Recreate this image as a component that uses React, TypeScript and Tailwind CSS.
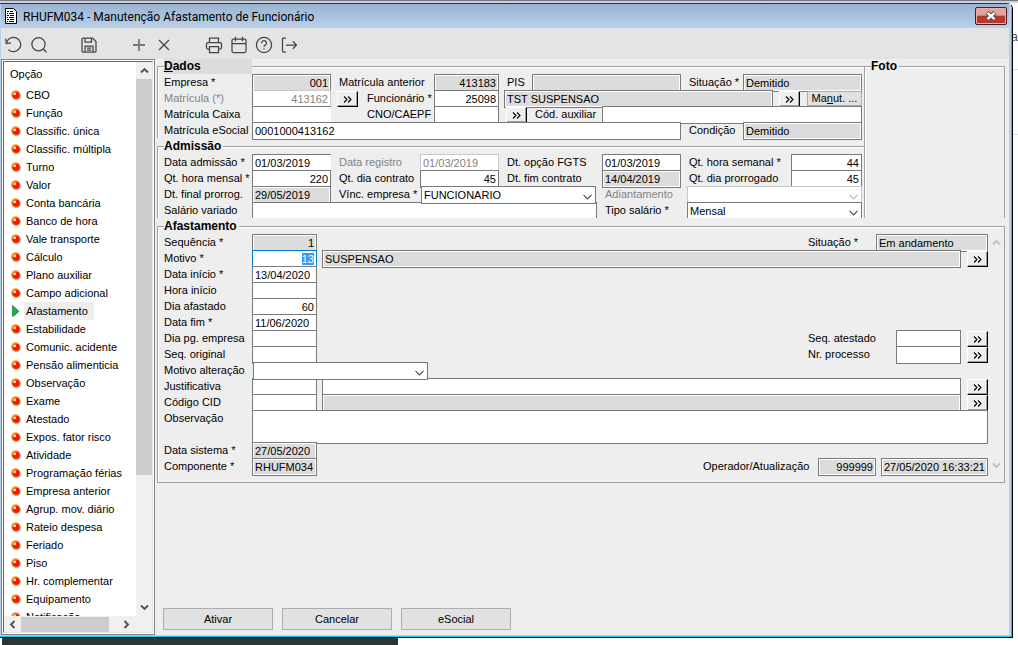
import { useEffect, useRef, type ReactNode } from 'react'
import clsx from 'clsx'

const options = [
  'CBO',
  'Função',
  'Classific. única',
  'Classific. múltipla',
  'Turno',
  'Valor',
  'Conta bancária',
  'Banco de hora',
  'Vale transporte',
  'Cálculo',
  'Plano auxiliar',
  'Campo adicional',
  'Afastamento',
  'Estabilidade',
  'Comunic. acidente',
  'Pensão alimenticia',
  'Observação',
  'Exame',
  'Atestado',
  'Expos. fator risco',
  'Atividade',
  'Programação férias',
  'Empresa anterior',
  'Agrup. mov. diário',
  'Rateio despesa',
  'Feriado',
  'Piso',
  'Hr. complementar',
  'Equipamento',
  'Notificação',
]

function Row({ children }: { children: ReactNode }) {
  return <div className="flex h-4 items-start">{children}</div>
}

type LabelProps = { htmlFor: string; className: string; muted?: boolean; children: ReactNode }

function Label({ htmlFor, className, muted, children }: LabelProps) {
  return (
    <label
      htmlFor={htmlFor}
      className={clsx('h-4 leading-4 whitespace-nowrap', muted ? 'text-[#838383]' : 'text-black', className)}
    >
      {children}
    </label>
  )
}

type FieldProps = {
  id: string
  className: string
  value?: string
  kind?: 'edit' | 'readonly' | 'disabled'
  right?: boolean
  label?: string
}

function Field({ id, className, value = '', kind = 'edit', right, label }: FieldProps) {
  return (
    <input
      id={id}
      aria-label={label}
      defaultValue={value}
      readOnly={kind === 'readonly'}
      disabled={kind === 'disabled'}
      className={clsx(
        'h-[18px] min-w-0 border px-0.5 outline-none',
        kind === 'edit' && 'border-[#7a7a7a] bg-white',
        kind === 'readonly' && 'border-[#7a7a7a] bg-[#dcdcdc] shadow-[inset_0_0_0_1px_#fff]',
        kind === 'disabled' && 'border-[#c8c8c8] bg-white text-[#838383]',
        right && 'text-right',
        className,
      )}
    />
  )
}

type DropdownProps = { id: string; className: string; value?: string; disabled?: boolean }

function Dropdown({ id, className, value = '', disabled }: DropdownProps) {
  return (
    <div className={clsx('relative', className)}>
      <select
        id={id}
        disabled={disabled}
        className={clsx(
          'block h-[18px] w-full appearance-none border bg-white px-0.5 pb-1 outline-none',
          disabled ? 'border-[#c8c8c8]' : 'border-[#7a7a7a]',
        )}
      >
        <option>{value}</option>
      </select>
      <svg
        viewBox="0 0 9 6"
        className={clsx(
          'pointer-events-none absolute top-2 right-1 h-1.5 w-[9px]',
          disabled ? 'text-[#b8b8b8]' : 'text-[#505050]',
        )}
      >
        <path d="M0.5 0.8L4.5 4.8L8.5 0.8" fill="none" stroke="currentColor" strokeWidth="1.2" />
      </svg>
    </div>
  )
}

function LookupButton({ label }: { label: string }) {
  return (
    <button
      aria-label={label}
      className="mt-px flex h-4 w-[21px] shrink-0 items-center justify-center border border-t-white border-r-black border-b-black border-l-white bg-[#eee] shadow-[inset_-1px_-1px_0_#a0a0a0]"
    >
      <svg viewBox="0 0 9 7" className="h-[7px] w-[9px]">
        <path d="M1 0.5L4 3.5L1 6.5M5 0.5L8 3.5L5 6.5" fill="none" stroke="#000" strokeWidth="1.1" />
      </svg>
    </button>
  )
}

function Group({ title, className, children }: { title: ReactNode; className?: string; children?: ReactNode }) {
  return (
    <fieldset
      className={clsx(
        'min-w-0 border-[#a0a0a0] pl-1.5 shadow-[inset_1px_1px_0_#fff]',
        className,
      )}
    >
      {title}
      {children}
    </fieldset>
  )
}

function ToolIcon({ label, children }: { label: string; children: ReactNode }) {
  return (
    <button aria-label={label} className="flex h-[18px] w-[25px] items-center justify-center text-[#444]">
      <svg viewBox="0 0 18 18" className="size-[18px]" fill="none" stroke="currentColor" strokeWidth="1.25">
        {children}
      </svg>
    </button>
  )
}

function Toolbar() {
  return (
    <div className="flex h-[31px] shrink-0 items-center bg-[#e4e4e4] pt-0.5">
      <ToolIcon label="Desfazer">
        <path d="M1.4 7.2A7.2 7.2 0 1 1 3.4 13.6" />
        <path d="M0.7 2.7L1.3 7.5L6 6.8" />
      </ToolIcon>
      <ToolIcon label="Pesquisar">
        <circle cx="8.5" cy="8.3" r="6.6" />
        <path d="M13.2 13L16.5 16.3" />
      </ToolIcon>
      <div className="w-[25px]" />
      <ToolIcon label="Salvar">
        <path d="M3 2h9.5L16 5.5V15a1 1 0 0 1-1 1H3a1 1 0 0 1-1-1V3a1 1 0 0 1 1-1z" />
        <path d="M5 2v4h6.5V2M5 16V10h8v6M7 12h4M7 14h4" />
      </ToolIcon>
      <div className="w-[25px]" />
      <ToolIcon label="Incluir">
        <path d="M9 3v12M3 9h12" stroke="#777" strokeWidth="1.8" />
      </ToolIcon>
      <ToolIcon label="Excluir">
        <path d="M4 4l10 10M14 4L4 14" />
      </ToolIcon>
      <div className="w-[25px]" />
      <ToolIcon label="Imprimir">
        <path d="M4.5 6.5V2h9v4.5M4.5 13H3a1.5 1.5 0 0 1-1.5-1.5V8A1.5 1.5 0 0 1 3 6.5h12A1.5 1.5 0 0 1 16.5 8v3.5A1.5 1.5 0 0 1 15 13h-1.5" />
        <path d="M4.5 10.5h9v6h-9z" />
      </ToolIcon>
      <ToolIcon label="Agenda">
        <rect x="2" y="3" width="14" height="13.5" rx="1.5" />
        <path d="M2 7.5h14M5.5 0.8v4.4M12.5 0.8v4.4" />
      </ToolIcon>
      <ToolIcon label="Ajuda">
        <circle cx="9" cy="9" r="7.6" />
        <path d="M6.6 7.2A2.4 2.4 0 1 1 10.4 9C9.5 9.6 9 9.9 9 10.8M9 12.2v1.4" />
      </ToolIcon>
      <ToolIcon label="Sair">
        <path d="M6 2H3.5a1 1 0 0 0-1 1v12a1 1 0 0 0 1 1H6M6 9h10.5M12.8 5.2L16.5 9l-3.7 3.8" />
      </ToolIcon>
    </div>
  )
}

function Bullet() {
  return (
    <svg viewBox="0 0 10 10" className="size-2.5">
      <circle cx="5.6" cy="5.7" r="4.3" fill="#b9a79c" />
      <circle cx="4.7" cy="4.7" r="4.5" fill="#f7941d" />
      <circle cx="5.1" cy="5.2" r="3.5" fill="#f01800" />
      <circle cx="3.7" cy="3.7" r="1.5" fill="#ffd9a0" />
    </svg>
  )
}

function Arrow({ d, color = '#505050' }: { d: string; color?: string }) {
  return (
    <svg viewBox="0 0 9 9" className="size-[9px]">
      <path d={d} fill="none" stroke={color} strokeWidth="1.9" />
    </svg>
  )
}

const UP = 'M1 6.5L4.5 3L8 6.5'
const DOWN = 'M1 2.5L4.5 6L8 2.5'
const LEFT = 'M6.5 1L3 4.5L6.5 8'
const RIGHT = 'M2.5 1L6 4.5L2.5 8'

function Sidebar() {
  return (
    <nav className="flex w-[154px] shrink-0 border border-[#7c8090] bg-white p-px">
      <div className="flex min-h-0 min-w-0 flex-1 flex-col border border-t-[#696969] border-r-[#e3e3e3] border-b-[#e3e3e3] border-l-[#696969]">
        <div className="flex min-h-0 flex-1">
          <div className="min-w-0 flex-1 overflow-hidden">
            <div className="h-6 pl-1.5 leading-6">Opção</div>
            <ul>
              {options.map((option) => (
                <li key={option} className="flex h-[18px] items-center pl-[7px]">
                  {option === 'Afastamento' ? (
                    <svg viewBox="0 0 10 12" className="h-3 w-2.5">
                      <path d="M2.5 1L8.5 6.5L2.5 12z" fill="#6a9bd8" />
                      <path d="M1.5 0.5L7.5 6L1.5 11.5z" fill="#12b83a" stroke="#0b7d3a" strokeWidth="0.7" />
                    </svg>
                  ) : (
                    <Bullet />
                  )}
                  <a
                    href="#"
                    className={clsx(
                      'ml-[3px] h-[18px] pr-1.5 pl-0.5 leading-[18px] whitespace-nowrap',
                      option === 'Afastamento' && 'bg-[#eee]',
                    )}
                  >
                    {option}
                  </a>
                </li>
              ))}
            </ul>
          </div>
          <div className="flex w-4 flex-col items-center bg-[#f0f0f0]">
            <div className="flex h-[17px] shrink-0 items-center">
              <Arrow d={UP} />
            </div>
            <div className="h-5/7 w-full bg-[#cdcdcd]" />
            <div className="flex-1" />
            <div className="flex h-[17px] shrink-0 items-center">
              <Arrow d={DOWN} />
            </div>
          </div>
        </div>
        <div className="flex h-4 shrink-0 items-center bg-[#f0f0f0]">
          <div className="flex w-[17px] justify-center">
            <Arrow d={LEFT} />
          </div>
          <div className="h-[15px] w-[88px] bg-[#cdcdcd]" />
          <div className="ml-[9px] flex w-[17px] justify-center">
            <Arrow d={RIGHT} />
          </div>
        </div>
      </div>
    </nav>
  )
}

function EmployeeData() {
  return (
    <Group
      className="border-t border-l"
      title={
        <legend className="h-[15px] w-[88px] bg-[#dcdcdc] text-xs leading-[15px] font-bold">
          <span className="underline">D</span>ados
        </legend>
      }
    >
      <div className="pr-0.5">
        <Row>
          <Label htmlFor="empresa" className="w-[88px]">Empresa *</Label>
          <Field id="empresa" className="w-[79px]" value="001" kind="readonly" right />
          <Label htmlFor="matricula-anterior" className="ml-2 w-[95px]">Matrícula anterior</Label>
          <Field id="matricula-anterior" className="w-[65px]" value="413183" kind="readonly" right />
          <Label htmlFor="pis" className="ml-2 w-[25px]">PIS</Label>
          <Field id="pis" className="flex-1" kind="readonly" />
          <Label htmlFor="situacao" className="ml-2 w-[54px]">Situação *</Label>
          <Field id="situacao" className="w-[119px]" value="Demitido" kind="readonly" />
        </Row>
        <Row>
          <Label htmlFor="matricula" className="w-[88px]" muted>Matrícula (*)</Label>
          <Field id="matricula" className="w-[79px] border-l-[#7a7a7a]" value="413162" kind="disabled" right />
          <div className="ml-1.5 flex w-[30px]">
            <LookupButton label="Buscar matrícula" />
          </div>
          <Label htmlFor="funcionario" className="w-[67px]">Funcionário *</Label>
          <Field id="funcionario" className="w-[65px]" value="25098" right />
          <Field id="nome" label="Nome do funcionário" className="ml-[5px] flex-1" value="TST SUSPENSAO" kind="readonly" />
          <div className="mr-[7px] ml-1.5 flex">
            <LookupButton label="Buscar funcionário" />
          </div>
          <button className="mt-px h-[15px] w-[55px] border border-[#adadad] bg-[#e1e1e1] leading-[13px]">
            Ma<span className="underline">n</span>ut. ...
          </button>
        </Row>
        <Row>
          <Label htmlFor="matricula-caixa" className="w-[88px]">Matrícula Caixa</Label>
          <Field id="matricula-caixa" className="w-[79px] border-r-0" />
          <Label htmlFor="cno" className="ml-9 w-[67px]">CNO/CAEPF</Label>
          <Field id="cno" className="w-[65px]" />
          <div className="mr-2 ml-[7px] flex">
            <LookupButton label="Buscar CNO" />
          </div>
          <Label htmlFor="auxiliar" className="w-[67px]">Cód. auxiliar</Label>
          <Field id="auxiliar" className="flex-1" />
        </Row>
        <Row>
          <Label htmlFor="esocial" className="w-[88px]">Matrícula eSocial</Label>
          <Field id="esocial" className="flex-1" value="0001000413162" />
          <Label htmlFor="condicao" className="ml-2 w-[54px]">Condição</Label>
          <Field id="condicao" className="w-[119px]" value="Demitido" kind="readonly" />
        </Row>
      </div>
    </Group>
  )
}

function Admission() {
  return (
    <Group
      className="border-t border-l"
      title={<legend className="h-4 bg-[#eee] pr-0.5 text-xs leading-4 font-bold">Admissão</legend>}
    >
      <div className="pr-0.5">
        <Row>
          <Label htmlFor="data-admissao" className="w-[88px]">Data admissão *</Label>
          <Field id="data-admissao" className="w-[79px] border-r-0" value="01/03/2019" />
          <Label htmlFor="data-registro" className="ml-2 w-[81px]" muted>Data registro</Label>
          <Field id="data-registro" className="w-[79px]" value="01/03/2019" kind="disabled" />
          <Label htmlFor="fgts" className="ml-2 w-[95px]">Dt. opção FGTS</Label>
          <Field id="fgts" className="flex-1" value="01/03/2019" />
          <Label htmlFor="hora-semanal" className="ml-2 w-[102px]">Qt. hora semanal *</Label>
          <Field id="hora-semanal" className="w-[71px]" value="44" right />
        </Row>
        <Row>
          <Label htmlFor="hora-mensal" className="w-[88px]">Qt. hora mensal *</Label>
          <Field id="hora-mensal" className="w-[79px]" value="220" right />
          <Label htmlFor="dia-contrato" className="ml-2 w-[81px]">Qt. dia contrato</Label>
          <Field id="dia-contrato" className="w-[79px]" value="45" right />
          <Label htmlFor="fim-contrato" className="ml-2 w-[95px]">Dt. fim contrato</Label>
          <Field id="fim-contrato" className="flex-1" value="14/04/2019" kind="readonly" />
          <Label htmlFor="dia-prorrogado" className="ml-2 w-[102px]">Qt. dia prorrogado</Label>
          <Field id="dia-prorrogado" className="w-[71px]" value="45" right />
        </Row>
        <Row>
          <Label htmlFor="final-prorrog" className="w-[88px]">Dt. final prorrog.</Label>
          <Field id="final-prorrog" className="w-[79px]" value="29/05/2019" kind="readonly" />
          <Label htmlFor="vinculo" className="ml-2 w-[82px]">Vínc. empresa *</Label>
          <Dropdown id="vinculo" className="w-[175px]" value="FUNCIONARIO" />
          <Label htmlFor="adiantamento" className="ml-[9px] flex-1" muted>Adiantamento</Label>
          <Dropdown id="adiantamento" className="w-[175px]" disabled />
        </Row>
        <Row>
          <Label htmlFor="salario-variado" className="w-[88px]">Salário variado</Label>
          <Field id="salario-variado" className="w-[345px]" />
          <Label htmlFor="tipo-salario" className="ml-2 flex-1">Tipo salário *</Label>
          <Dropdown id="tipo-salario" className="w-[175px]" value="Mensal" />
        </Row>
      </div>
    </Group>
  )
}

function Leave() {
  const reason = useRef<HTMLInputElement>(null)

  useEffect(() => {
    reason.current?.focus()
    reason.current?.select()
  }, [])

  return (
    <Group
      className="border"
      title={<legend className="h-4 bg-[#eee] pr-0.5 text-xs leading-4 font-bold">Afastamento</legend>}
    >
      <div className="flex pb-2">
        <div className="min-w-0 flex-1">
          <Row>
            <Label htmlFor="sequencia" className="w-[88px]">Sequência *</Label>
            <Field id="sequencia" className="w-[65px]" value="1" kind="readonly" right />
            <div className="flex-1" />
            <Label htmlFor="situacao-afastamento" className="w-[68px]">Situação *</Label>
            <Field id="situacao-afastamento" className="w-28" value="Em andamento" kind="readonly" />
          </Row>
          <Row>
            <Label htmlFor="motivo" className="w-[88px]">Motivo *</Label>
            <input
              id="motivo"
              ref={reason}
              defaultValue="13"
              className="h-[18px] w-[65px] border border-[#0078d7] bg-white px-0.5 text-right outline-none selection:bg-[#3399ff] selection:text-white"
            />
            <Field id="motivo-descricao" label="Descrição do motivo" className="mr-1.5 ml-[5px] flex-1" value="SUSPENSAO" kind="readonly" />
            <LookupButton label="Buscar motivo" />
          </Row>
          <Row>
            <Label htmlFor="data-inicio" className="w-[88px]">Data início *</Label>
            <Field id="data-inicio" className="w-[65px]" value="13/04/2020" />
          </Row>
          <Row>
            <Label htmlFor="hora-inicio" className="w-[88px]">Hora início</Label>
            <Field id="hora-inicio" className="w-[65px]" />
          </Row>
          <Row>
            <Label htmlFor="dia-afastado" className="w-[88px]">Dia afastado</Label>
            <Field id="dia-afastado" className="w-[65px]" value="60" right />
          </Row>
          <Row>
            <Label htmlFor="data-fim" className="w-[88px]">Data fim *</Label>
            <Field id="data-fim" className="w-[65px]" value="11/06/2020" />
          </Row>
          <Row>
            <Label htmlFor="dia-pg" className="w-[88px]">Dia pg. empresa</Label>
            <Field id="dia-pg" className="w-[65px]" />
            <div className="flex-1" />
            <Label htmlFor="seq-atestado" className="w-[88px]">Seq. atestado</Label>
            <Field id="seq-atestado" className="mr-1.5 w-[65px]" />
            <LookupButton label="Buscar atestado" />
          </Row>
          <Row>
            <Label htmlFor="seq-original" className="w-[88px]">Seq. original</Label>
            <Field id="seq-original" className="w-[65px]" />
            <div className="flex-1" />
            <Label htmlFor="nr-processo" className="w-[88px]">Nr. processo</Label>
            <Field id="nr-processo" className="mr-1.5 w-[65px]" />
            <LookupButton label="Buscar processo" />
          </Row>
          <Row>
            <Label htmlFor="motivo-alteracao" className="w-[89px]">Motivo alteração</Label>
            <Dropdown id="motivo-alteracao" className="w-[175px]" />
          </Row>
          <Row>
            <Label htmlFor="justificativa" className="w-[88px]">Justificativa</Label>
            <Field id="justificativa" className="w-[65px]" />
            <Field id="justificativa-descricao" label="Descrição da justificativa" className="mr-1.5 ml-[5px] flex-1" />
            <LookupButton label="Buscar justificativa" />
          </Row>
          <Row>
            <Label htmlFor="cid" className="w-[88px]">Código CID</Label>
            <Field id="cid" className="w-[65px]" />
            <Field id="cid-descricao" label="Descrição do CID" className="mr-1.5 ml-[5px] flex-1" kind="readonly" />
            <LookupButton label="Buscar CID" />
          </Row>
          <div className="flex h-8">
            <Label htmlFor="observacao" className="w-[88px]">Observação</Label>
            <textarea
              id="observacao"
              className="h-[34px] min-w-0 flex-1 resize-none border border-[#7a7a7a] bg-white px-0.5 outline-none"
            />
          </div>
          <Row>
            <Label htmlFor="data-sistema" className="w-[88px]">Data sistema *</Label>
            <Field id="data-sistema" className="w-[65px]" value="27/05/2020" kind="readonly" />
          </Row>
          <Row>
            <Label htmlFor="componente" className="w-[88px]">Componente *</Label>
            <Field id="componente" className="w-[65px]" value="RHUFM034" kind="readonly" />
            <div className="flex-1" />
            <Label htmlFor="operador" className="w-[115px]">Operador/Atualização</Label>
            <Field id="operador" className="mr-[5px] w-[58px]" value="999999" kind="readonly" right />
            <Field id="atualizacao" label="Atualização" className="w-[107px]" value="27/05/2020 16:33:21" kind="readonly" />
          </Row>
        </div>
        <div className="flex w-4 flex-col items-center justify-between pt-1 pb-1">
          <Arrow d={UP} color="#bfbfbf" />
          <Arrow d={DOWN} color="#bfbfbf" />
        </div>
      </div>
    </Group>
  )
}

function TitleBar() {
  return (
    <header className="flex h-6 shrink-0 items-center bg-linear-to-b from-[#9ab3d1] to-[#b9d1ea] pr-0.5 pl-1">
      <svg viewBox="0 0 12 16" className="h-4 w-3">
        <path d="M0.5 0.5h8l3 3v12h-11z" fill="#fff" stroke="#000" />
        <path
          d="M2 3.5h2M5 3.5h3M2 5.5h1M4 5.5h5M2 7.5h2M5 7.5h4M2 9.5h1M4 9.5h5M2 11.5h2M5 11.5h4M2 13.5h1M4 13.5h5"
          stroke="#000"
        />
      </svg>
      <h1 className="ml-1.5 flex-1 pt-0.5 font-['Roboto','Noto_Sans',sans-serif] text-xs leading-6">
        RHUFM034 - Manutenção Afastamento de Funcionário
      </h1>
      <button
        aria-label="Fechar"
        className="flex h-[18px] w-8 items-center justify-center rounded-xs border border-[#4c1a20] bg-linear-to-b from-[#e3a39a] from-45% to-[#b8392a] to-50% shadow-[inset_0_0_0_1px_#e8b0a8]"
      >
        <svg viewBox="0 0 12 10" className="h-2.5 w-3">
          <path d="M2 1.5L10 8.5M10 1.5L2 8.5" stroke="#56484c" strokeWidth="4.4" />
          <path d="M2.4 1.8L9.6 8.2M9.6 1.8L2.4 8.2" stroke="#fff" strokeWidth="2.4" />
        </svg>
      </button>
    </header>
  )
}

function ActionButton({ children }: { children: ReactNode }) {
  return <button className="h-[22px] w-[110px] border border-[#adadad] bg-[#e1e1e1]">{children}</button>
}

export default function App() {
  return (
    <div className="flex h-screen flex-col overflow-hidden bg-white font-['Liberation_Sans',Arial,sans-serif] text-[11px] text-black">
      <div className="h-[3px] shrink-0 border-t border-[#77777f] bg-[#cfd0e2]" />
      <div className="flex min-h-0 flex-1">
        <div className="flex min-w-0 flex-1 flex-col rounded-tr-md border-t border-r border-b border-t-[#2c3440] border-r-black border-b-black">
          <div className="flex min-h-0 flex-1 flex-col rounded-tr-md border-r border-b border-[#1fc3ea]">
            <div className="flex min-h-0 flex-1 flex-col border-r-2 border-b border-l border-[#b9d1ea] bg-[#eee]">
              <TitleBar />
              <Toolbar />
              <div className="flex min-h-0 flex-1">
                <Sidebar />
                <main className="flex min-w-0 flex-1 flex-col pr-1 pb-[5px] pl-0.5">
                  <div className="flex h-[159px] shrink-0 overflow-hidden">
                    <div className="min-w-0 flex-1">
                      <EmployeeData />
                      <Admission />
                    </div>
                    <Group
                      className="w-[141px] border-x border-t"
                      title={<legend className="h-[15px] bg-[#eee] pr-0.5 text-xs leading-[15px] font-bold">Foto</legend>}
                    />
                  </div>
                  <Leave />
                  <div className="flex-1" />
                  <div className="flex gap-[9px] pl-1.5">
                    <ActionButton>Ativar</ActionButton>
                    <ActionButton>Cancelar</ActionButton>
                    <ActionButton>eSocial</ActionButton>
                  </div>
                </main>
              </div>
            </div>
          </div>
        </div>
        <div className="w-[5px] shrink-0 overflow-hidden">
          <div className="flex h-[67px] justify-end border-b border-[#ddd] pt-6 text-[13px] text-[#555]">a</div>
          <div className="h-[65px] border-b border-[#ddd]" />
        </div>
      </div>
      <div className="flex h-[7px] shrink-0 pl-0.5">
        <div className="w-[39%] bg-[#2b3638]" />
      </div>
    </div>
  )
}
